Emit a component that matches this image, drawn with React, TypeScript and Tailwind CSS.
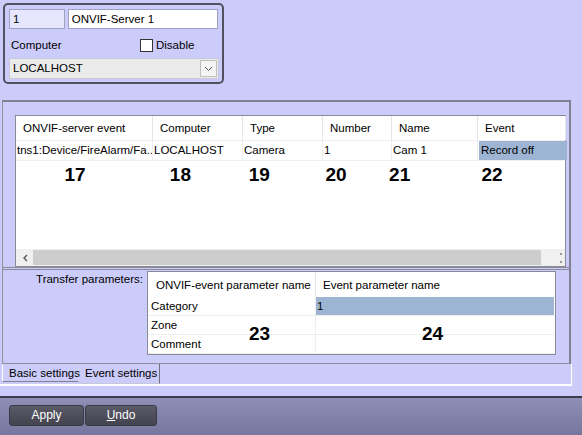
import React from 'react';

const cols = [
  { title: 'ONVIF-server event', w: 137, val: 'tns1:Device/FireAlarm/Fa..', num: '17' },
  { title: 'Computer', w: 90, val: 'LOCALHOST', num: '18' },
  { title: 'Type', w: 80, val: 'Camera', num: '19' },
  { title: 'Number', w: 69, val: '1', num: '20' },
  { title: 'Name', w: 86, val: 'Cam 1', num: '21' },
  { title: 'Event', w: 88, val: 'Record off', num: '22', selected: true },
];

const params = ['Category', 'Zone', 'Comment'];

export default function App() {
  return (
    <div
      className="w-[582px] h-[435px] bg-[#ccccfa] flex flex-col overflow-hidden text-[11.5px] text-black whitespace-nowrap"
      style={{ fontFamily: '"Liberation Sans", Arial, sans-serif' }}
    >
      {/* Header panel: id, name, computer */}
      <div className="mt-[3px] ml-[3px] w-[221px] h-[81px] shrink-0 border-2 border-[#50505e] rounded-[5px] px-[4px] pt-[4px]">
        <div className="flex gap-[3px]">
          <div className="w-[56px] h-[20px] bg-[#e6e6ff] border border-[#a0a0c0] pl-[3px] leading-[18px]">1</div>
          <div className="w-[151px] h-[20px] bg-white border border-[#a0a0c0] pl-[3px] leading-[18px]">ONVIF-Server 1</div>
        </div>
        <div className="flex items-center mt-[10px] h-[13px]">
          <span className="ml-[2px] w-[129px]">Computer</span>
          <span className="w-[13px] h-[13px] bg-white border border-[#333]" />
          <span className="ml-[3px]">Disable</span>
        </div>
        <div className="mt-[6px] w-[210px] h-[21px] bg-[#ebebeb] border border-[#c8c8d8] flex items-center justify-between">
          <span className="pl-[3px]">LOCALHOST</span>
          <span className="w-[17px] h-[17px] mr-[1px] bg-[#f4f4f4] border border-[#c0c0c0] flex items-center justify-center">
            <svg width="9" height="6" viewBox="0 0 9 6">
              <path d="M1 1 L4.5 4.5 L8 1" fill="none" stroke="#555" strokeWidth="1" />
            </svg>
          </span>
        </div>
      </div>

      {/* Tab page */}
      <div className="mt-[16px] ml-[2px] w-[569px] h-[264px] shrink-0 border-t-2 border-l border-r-2 border-b border-t-[#808090] border-l-[#909098] border-r-[#808090] border-b-[#909098] flex flex-col">
        {/* Events grid */}
        <div className="h-[168px] shrink-0 pl-[12px] pt-[13px] border-b-[3px] border-double border-b-[#8a8a9a]">
          <div className="w-[551px] h-[152px] bg-white border border-[#8a8a98] flex flex-col">
            <div className="flex h-[25px] border-b border-[#f0f0f0]">
              {cols.map((c) => (
                <div key={c.title} style={{ width: c.w }} className="shrink-0 border-r border-[#e4e4e4] pl-[7px] leading-[25px]">
                  {c.title}
                </div>
              ))}
            </div>
            <div className="flex h-[20px] border-b border-[#f0f0f0]">
              {cols.map((c) => (
                <div
                  key={c.title}
                  style={{ width: c.w }}
                  className={
                    c.selected
                      ? 'shrink-0 bg-[#9db5d2] pl-[2px] leading-[19px] ml-[1px]'
                      : 'shrink-0 border-r border-[#eeeeee] pl-[1px] leading-[19px] overflow-hidden'
                  }
                >
                  {c.val}
                </div>
              ))}
            </div>
            <div className="flex h-[22px] mt-[3px] text-[19px] font-bold leading-[22px]">
              <span className="w-[127px] text-center">17</span>
              <span className="w-[100px] text-center">18</span>
              <span className="w-[70px] text-center">19</span>
              <span className="w-[95px] text-center">20</span>
              <span className="w-[42px] text-center">21</span>
              <span className="w-[157px] text-center">22</span>
            </div>
            <div className="flex-1" />
            <div className="flex h-[17px] items-center bg-[#f0f0f0]">
              <span className="w-[17px] h-[17px] flex items-center justify-center">
                <svg width="6" height="8" viewBox="0 0 6 8">
                  <path d="M5 1 L2 4 L5 7" fill="none" stroke="#555" strokeWidth="1.4" />
                </svg>
              </span>
              <span className="w-[508px] h-[15px] bg-[#cdcdcd]" />
              <span className="flex-1" />
              <span className="w-[3px] h-[10px] flex flex-col justify-between mr-[2px]">
                <span className="w-[2px] h-[2px] bg-[#999]" />
                <span className="w-[2px] h-[2px] bg-[#999]" />
              </span>
            </div>
          </div>
        </div>

        {/* Transfer parameters */}
        <div className="flex pt-[1px]">
          <div className="w-[144px] shrink-0 text-right pr-[4px] pt-[2px] leading-[13px]">Transfer parameters:</div>
          <div className="relative w-[409px] h-[84px] bg-white border border-[#8a8a98] flex flex-col">
            <div className="flex h-[25px]">
              <div className="w-[168px] border-r border-[#e4e4e4] pl-[8px] leading-[26px]">ONVIF-event parameter name</div>
              <div className="flex-1 pl-[7px] leading-[26px]">Event parameter name</div>
            </div>
            {params.map((p, i) => (
              <div key={p} className="flex h-[19px] border-b border-[#eeeeee] last:border-b-0">
                <div className="w-[168px] border-r border-[#eeeeee] pl-[3px] leading-[19px]">{p}</div>
                <div className={i === 0 ? 'w-[238px] bg-[#9db5d2] pl-[1px] leading-[19px]' : 'w-[238px]'}>
                  {i === 0 ? '1' : ''}
                </div>
              </div>
            ))}
            <span className="absolute left-[101px] top-[52px] text-[19px] font-bold leading-[20px]">23</span>
            <span className="absolute left-[274px] top-[52px] text-[19px] font-bold leading-[20px]">24</span>
          </div>
        </div>
      </div>

      {/* Tab strip */}
      <div className="flex h-[22px] w-[572px] shrink-0 border-r border-b-2 border-white">
        <div className="ml-[2px] mt-[1px] w-[77px] h-[17px] border border-t-0 border-l-white border-b-[#808090] border-r-[#d8d8e8] pl-[6px] leading-[17px]">
          Basic settings
        </div>
        <div className="w-[81px] h-[20px] border-r border-b border-r-[#70707e] border-b-[#c8c8dd] pl-[6px] leading-[18px]">
          Event settings
        </div>
      </div>

      <div className="h-[10px] shrink-0" />

      {/* Footer */}
      <div className="flex-1 border-t-2 border-[#3c3c50] bg-gradient-to-b from-[#8e8eb6] to-[#76769e] flex items-start gap-[1px] pl-[9px] pt-[7px]">
        <button className="w-[75px] h-[21px] rounded-[3px] border border-[#3a3a48] bg-gradient-to-b from-[#5a5a68] to-[#44444f] text-white text-[12px] leading-[19px]">
          Apply
        </button>
        <button className="w-[72px] h-[21px] rounded-[3px] border border-[#3a3a48] bg-gradient-to-b from-[#5a5a68] to-[#44444f] text-white text-[12px] leading-[19px]">
          <span className="underline">U</span>ndo
        </button>
      </div>
    </div>
  );
}
